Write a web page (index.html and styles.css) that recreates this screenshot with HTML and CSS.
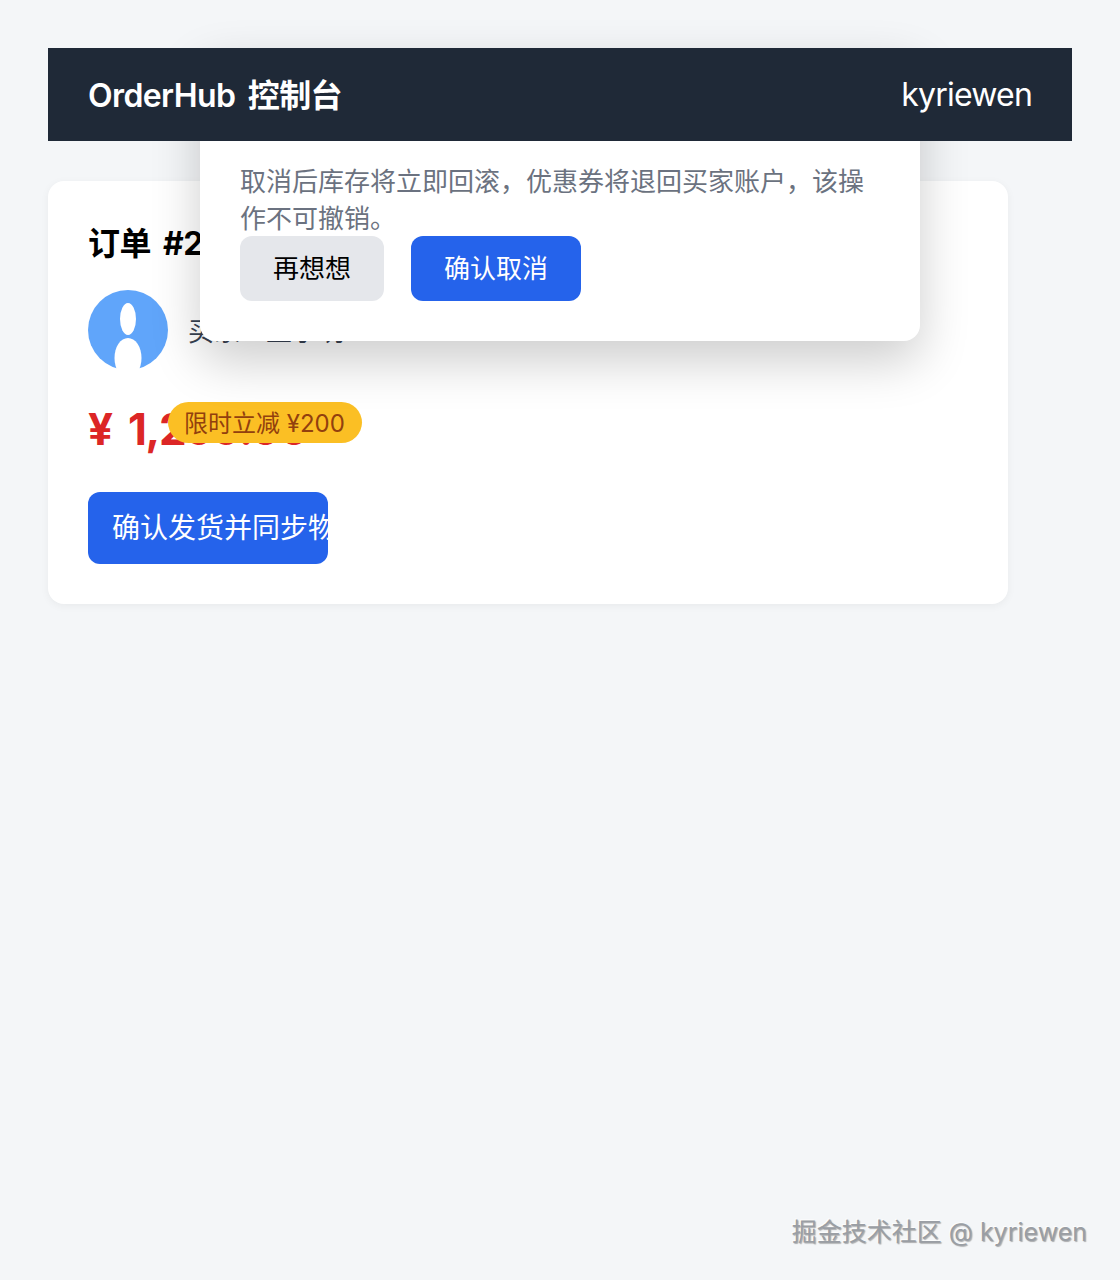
FILE: index.html
```html
<!DOCTYPE html>
<html lang="zh">
<head>
  <meta charset="utf-8">
  <title>OrderHub 控制台</title>
  <link rel="stylesheet" href="styles.css">
</head>
<body>
  <header class="topbar">
    <div class="brand">OrderHub 控制台</div>
    <div class="user">kyriewen</div>
  </header>

  <main class="order-card">
    <h2 class="order-title">订单 #20240611</h2>
    <div class="buyer">
      <svg class="avatar" viewBox="0 0 80 80">
        <circle cx="40" cy="40" r="40" fill="#60a5fa"/>
        <ellipse cx="40" cy="29" rx="8" ry="16" fill="#fff"/>
        <ellipse cx="40" cy="68" rx="13.500" ry="20" fill="#fff"/>
      </svg>
      <span class="buyer-name">买家：王小明</span>
    </div>
    <div class="price-row">
      <span class="price">¥ 1,299.00</span>
      <span class="badge">限时立减 ¥200</span>
    </div>
    <button class="ship-button">确认发货并同步物流信息</button>
  </main>

  <div class="modal">
    <p class="modal-text">取消后库存将立即回滚，优惠券将退回买家账户，该操作不可撤销。</p>
    <div class="modal-actions">
      <button class="btn btn-gray">再想想</button>
      <button class="btn btn-blue">确认取消</button>
    </div>
  </div>

  <div class="watermark">掘金技术社区 @ kyriewen</div>
</body>
</html>
```

FILE: styles.css
```css
* {
  box-sizing: border-box;
}
html, body {
  height: 100%;
}
body {
  margin: 0;
  padding: 48px;
  background-color: #f4f6f8;
  font-family: Inter, "Noto Sans CJK SC", sans-serif;
  position: relative;
}
.topbar {
  position: relative;
  z-index: 20;
  height: 93px;
  padding: 0 40px;
  display: flex;
  justify-content: space-between;
  align-items: center;
  background-color: #1f2937;
  color: #fff;
  font-size: 32px;
}
.brand {
  margin-bottom: 4px;
  font-weight: 600;
  letter-spacing: -0.6px;
  word-spacing: 5px;
}
.user {
  letter-spacing: -0.8px;
}
.order-card {
  width: 960px;
  height: 423px;
  margin-top: 40px;
  padding: 40px;
  background-color: #fff;
  border-radius: 16px;
  box-shadow: 0 2px 8px rgba(0, 0, 0, 0.05);
}
.order-title {
  margin: 0 0 24px;
  font-size: 32px;
  line-height: 45px;
  font-weight: 700;
  color: #000;
  word-spacing: 5px;
  letter-spacing: -0.5px;
}
.buyer {
  display: flex;
  align-items: center;
  gap: 20px;
}
.avatar {
  width: 80px;
  height: 80px;
  display: block;
}
.buyer-name {
  padding-bottom: 2px;
  font-size: 26px;
  color: #374151;
}
.price-row {
  position: relative;
  margin-top: 32px;
  height: 58px;
}
.price {
  display: block;
  font-size: 44px;
  line-height: 54px;
  font-weight: 700;
  color: #dc2626;
  letter-spacing: -1.3px;
  word-spacing: 7px;
}
.badge {
  position: absolute;
  left: 80px;
  top: 0;
  height: 41px;
  padding: 0 17px 3px 16px;
  display: flex;
  align-items: center;
  background-color: #fbbf24;
  color: #92400e;
  border-radius: 21px;
  font-size: 24px;
  white-space: nowrap;
}
.ship-button {
  display: block;
  width: 240px;
  height: 72px;
  margin-top: 32px;
  padding: 0 24px 4px;
  overflow: hidden;
  border: none;
  border-radius: 12px;
  background-color: #2563eb;
  color: #fff;
  font-family: inherit;
  font-size: 28px;
  text-align: left;
  white-space: nowrap;
}
.modal {
  position: absolute;
  left: 200px;
  top: 48px;
  z-index: 10;
  width: 720px;
  height: 293px;
  padding: 40px;
  display: flex;
  flex-direction: column;
  justify-content: flex-end;
  background-color: #fff;
  border-radius: 16px;
  box-shadow: 0 20px 50px rgba(0, 0, 0, 0.2);
}
.modal-text {
  margin: 0 0 -1px;
  font-size: 26px;
  line-height: 37px;
  color: #6b7280;
}
.modal-actions {
  display: flex;
  gap: 27px;
}
.btn {
  height: 65px;
  padding: 0 33px 4px;
  border: none;
  border-radius: 12px;
  font-family: inherit;
  font-size: 26px;
}
.btn-gray {
  background-color: #e5e7eb;
  color: #000;
}
.btn-blue {
  background-color: #2563eb;
  color: #fff;
}
.watermark {
  position: absolute;
  right: 33px;
  bottom: 30px;
  font-size: 25px;
  line-height: 36px;
  color: #9a9ea4;
  text-shadow: 1px 1px 1px rgba(0, 0, 0, 0.3), -1px -1px 0 rgba(255, 255, 255, 0.8);
}
```
